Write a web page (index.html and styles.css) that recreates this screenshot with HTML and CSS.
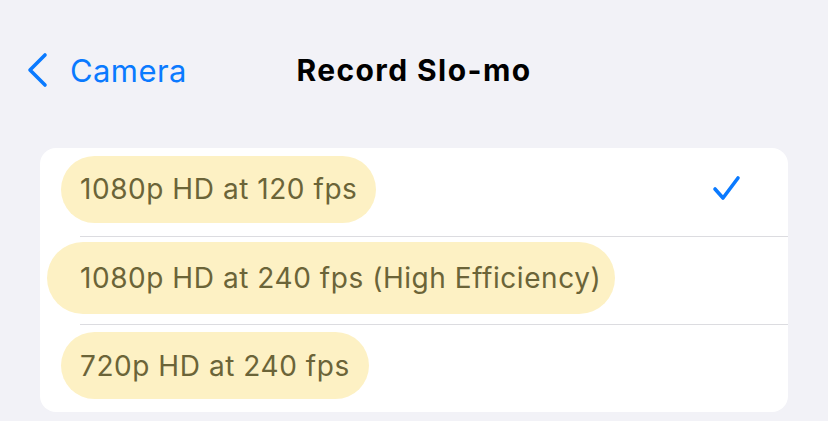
FILE: index.html
```html
<!DOCTYPE html>
<html lang="en">
<head>
    <meta charset="UTF-8">
    <meta name="viewport" content="width=device-width, initial-scale=1.0">
    <title>Record Slo-mo</title>
    <link rel="stylesheet" href="styles.css">
</head>
<body>

<header class="nav">
    <a class="back" href="#">
        <svg class="chev" width="24" height="36" viewBox="0 0 24 36">
            <path d="M20 3 L5 18 L20 33" fill="none" stroke="#0a7aff" stroke-width="3.6" stroke-linecap="round" stroke-linejoin="round"/>
        </svg>
        <span>Camera</span>
    </a>
    <h1 class="title">Record Slo-mo</h1>
    <div></div>
</header>

<main>
    <div class="card">
        <div class="row">
            <span class="pill">1080p HD at 120 fps</span>
            <svg class="check" width="30" height="28" viewBox="0 0 30 28">
                <path d="M3 14 L11 23 L26 3" fill="none" stroke="#0a7aff" stroke-width="3.6" stroke-linecap="round" stroke-linejoin="round"/>
            </svg>
        </div>
        <div class="row">
            <span class="pill pill-wide">1080p HD at 240 fps (High Efficiency)</span>
        </div>
        <div class="row">
            <span class="pill">720p HD at 240 fps</span>
        </div>
    </div>
</main>

</body>
</html>
```

FILE: styles.css
```css
*{
  margin: 0;
  padding: 0;
  box-sizing: border-box;
}
body{
  background-color: #f2f2f7;
  font-family: Inter, "Liberation Sans", sans-serif;
  width: 828px;
  height: 421px;
  overflow: hidden;
}

/* top bar */
.nav{
  height: 140px;
  display: grid;
  grid-template-columns: 1fr auto 1fr;
  align-items: center;
}
.back{
  display: flex;
  align-items: center;
  padding-left: 25px;
  color: #0a7aff;
  text-decoration: none;
  font-size: 31px;
  letter-spacing: 0.4px;
}
.back span{
  margin-left: 21px;
}
.title{
  font-size: 30px;
  font-weight: 700;
  color: #000;
  letter-spacing: 1.4px;
}

/* list */
.card{
  margin: 8px 40px 0;
  background: #fff;
  border-radius: 16px;
  overflow: hidden;
}
.row{
  height: 88px;
  display: flex;
  align-items: center;
  padding-left: 40px;
  padding-bottom: 6px;
}
.row + .row{
  border-top: 1px solid #dcdce0;
  margin-left: 40px;
  padding-left: 0;
}
.pill{
  background: #fdf1c4;
  color: #6b6438;
  font-size: 28px;
  letter-spacing: 0.55px;
  height: 67px;
  display: flex;
  align-items: center;
  border-radius: 34px;
  margin-left: -19px;
  padding: 0 19px 0 19px;
}
.pill-wide{
  height: 72px;
  border-radius: 36px;
  margin-left: -33px;
  padding-left: 33px;
  padding-right: 14px;
}
.check{
  margin-left: auto;
  margin-right: 46px;
}
```
